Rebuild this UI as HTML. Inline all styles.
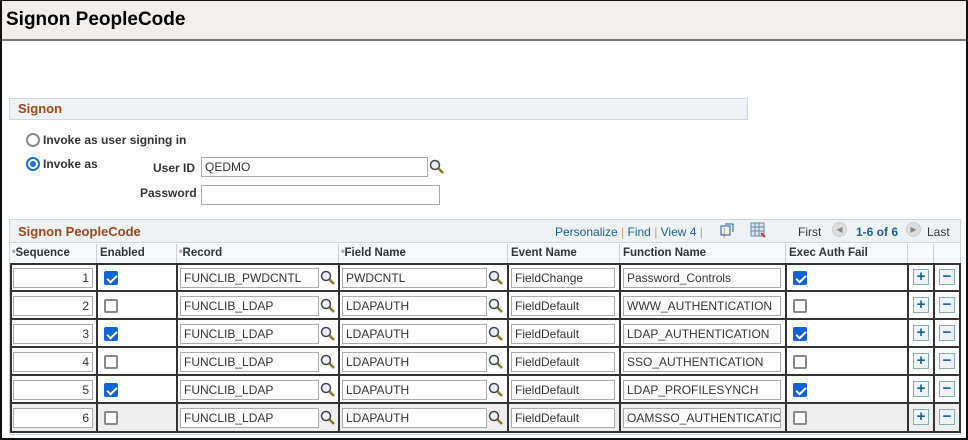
<!DOCTYPE html>
<html><head><meta charset="utf-8"><style>
*{box-sizing:border-box;margin:0;padding:0}
body{width:968px;height:440px;position:relative;background:#fff;font-family:"Liberation Sans",Arial,sans-serif;font-size:12px;color:#333;overflow:hidden}
.a{position:absolute}
.frame{left:0;top:0;width:968px;height:440px;border:2px solid #111;border-top:1px solid #111}
.hdr{left:2px;top:1px;width:964px;height:40px;background:#f0efee;border-bottom:2px solid #777}
.ttl{left:6px;top:9px;font-size:19px;font-weight:bold;color:#000}
.sec{background:#eff2f4;border:1px solid #cfd5d9;color:#a0461c;font-weight:bold;font-size:13px;padding-left:8px;line-height:19px}
.b{font-weight:bold;color:#333}
.inp{border:1px solid #aaa;background:#fff;height:20px;font-size:12px;line-height:18px;padding-left:3px;color:#333;white-space:nowrap;overflow:hidden}
.rad{width:14px;height:14px;border-radius:50%;border:2px solid #888;background:#fff}
.rad.on{border-color:#1a6fd9}
.rad.on::after{content:"";position:absolute;left:2px;top:2px;width:6px;height:6px;border-radius:50%;background:#1a6fd9}
.cb{width:14px;height:14px;border:2px solid #888;border-radius:2px;background:#fff}
.cb.on{background:#1463d6;border-color:#1463d6}
.cb.on::after{content:"";position:absolute;left:3px;top:0px;width:4px;height:8px;border:solid #fff;border-width:0 2px 2px 0;transform:rotate(45deg)}
.hc{font-weight:bold;font-size:11.5px;color:#333;top:247px}
.pb{width:16px;height:16px;border:1px solid #8aa;background:#eef3f7;color:#1b5ea0;font-weight:bold;font-size:15px;line-height:13px;text-align:center}
</style></head><body>
<div class="a hdr"></div>
<div class="a ttl">Signon PeopleCode</div>

<div class="a sec" style="left:9px;top:98px;width:739px;height:22px">Signon</div>
<div class="a rad" style="left:26px;top:133px"></div>
<div class="a b" style="left:43px;top:133px">Invoke as user signing in</div>
<div class="a rad on" style="left:26px;top:157px"></div>
<div class="a b" style="left:43px;top:157px">Invoke as</div>
<div class="a b" style="left:153px;top:161px">User ID</div>
<div class="a inp" style="left:201px;top:157px;width:227px">QEDMO</div>
<svg class="a" style="left:429px;top:159px" width="16" height="16" viewBox="0 0 16 16"><circle cx="6" cy="6" r="4.5" fill="#e8f0f6" stroke="#445" stroke-width="1.5"/><path d="M9.5 9.5 L14 14" stroke="#8a7a20" stroke-width="2.5"/></svg>
<div class="a b" style="left:140px;top:186px">Password</div>
<div class="a inp" style="left:201px;top:185px;width:239px"></div>

<div class="a" style="left:9px;top:219px;width:952px;height:216px;border:1px solid #cfd5d9"></div>
<div class="a sec" style="left:9px;top:219px;width:952px;height:24px;line-height:23px">Signon PeopleCode</div>
<div class="a" style="left:555px;top:225px;color:#1b5ea0">Personalize <span style="color:#c8a060">|</span> Find <span style="color:#c8a060">|</span> View 4 <span style="color:#c8a060">|</span> <span style="display:inline-block;width:13px"></span> <span style="color:#c8a060">|</span></div>
<svg class="a" style="left:720px;top:223px" width="14" height="13"><rect x="1" y="3" width="9" height="9" fill="none" stroke="#1b5ea0"/><path d="M5 1h8v8" fill="none" stroke="#1b5ea0"/></svg>
<svg class="a" style="left:750px;top:222px" width="16" height="16"><rect x="1" y="1" width="13" height="13" fill="#dde6f0" stroke="#6a85a5"/><path d="M1 5h13M1 9h13M5 1v13M9 1v13" stroke="#6a85a5"/><path d="M11 11l4 4" stroke="#c33" stroke-width="2"/></svg>
<div class="a" style="left:798px;top:225px;color:#333">First</div>
<div class="a" style="left:832px;top:222px;width:15px;height:15px;border-radius:50%;background:#ddd;border:1px solid #ccc;font-size:8px;color:#888;text-align:center;line-height:13px">◀</div>
<div class="a" style="left:856px;top:225px;color:#1b5ea0;font-weight:bold">1-6 of 6</div>
<div class="a" style="left:906px;top:222px;width:15px;height:15px;border-radius:50%;background:#ddd;border:1px solid #ccc;font-size:8px;color:#888;text-align:center;line-height:13px">▶</div>
<div class="a" style="left:927px;top:225px;color:#333">Last</div>

<div class="a" style="left:10px;top:244px;width:950px;height:20px;background:#f6f8f9"></div>
<div class="a hc" style="left:12px"><span style="color:#889;font-size:9px">*</span>Sequence</div>
<div class="a hc" style="left:100px">Enabled</div>
<div class="a hc" style="left:179px"><span style="color:#889;font-size:9px">*</span>Record</div>
<div class="a hc" style="left:341px"><span style="color:#889;font-size:9px">*</span>Field Name</div>
<div class="a hc" style="left:511px">Event Name</div>
<div class="a hc" style="left:623px">Function Name</div>
<div class="a hc" style="left:789px">Exec Auth Fail</div>
<div class="a" style="left:96px;top:244px;width:1px;height:20px;background:#ccd"></div>
<div class="a" style="left:176px;top:244px;width:1px;height:20px;background:#ccd"></div>
<div class="a" style="left:338px;top:244px;width:1px;height:20px;background:#ccd"></div>
<div class="a" style="left:507px;top:244px;width:1px;height:20px;background:#ccd"></div>
<div class="a" style="left:619px;top:244px;width:1px;height:20px;background:#ccd"></div>
<div class="a" style="left:785px;top:244px;width:1px;height:20px;background:#ccd"></div>
<div class="a" style="left:907px;top:244px;width:1px;height:20px;background:#ccd"></div>
<div class="a" style="left:933px;top:244px;width:1px;height:20px;background:#ccd"></div>

<div class="a" style="left:10px;top:403px;width:950px;height:28px;background:#eee"></div>
<div class="a" style="left:10px;top:263px;width:951px;height:170px;border:2px solid #333"></div>
<div class="a" style="left:10px;top:290px;width:951px;height:2px;background:#333"></div>
<div class="a" style="left:10px;top:318px;width:951px;height:2px;background:#333"></div>
<div class="a" style="left:10px;top:346px;width:951px;height:2px;background:#333"></div>
<div class="a" style="left:10px;top:374px;width:951px;height:2px;background:#333"></div>
<div class="a" style="left:10px;top:402px;width:951px;height:2px;background:#333"></div>
<div class="a" style="left:96px;top:263px;width:2px;height:170px;background:#333"></div>
<div class="a" style="left:176px;top:263px;width:2px;height:170px;background:#333"></div>
<div class="a" style="left:338px;top:263px;width:2px;height:170px;background:#333"></div>
<div class="a" style="left:507px;top:263px;width:2px;height:170px;background:#333"></div>
<div class="a" style="left:619px;top:263px;width:2px;height:170px;background:#333"></div>
<div class="a" style="left:785px;top:263px;width:2px;height:170px;background:#333"></div>
<div class="a" style="left:907px;top:263px;width:2px;height:170px;background:#333"></div>
<div class="a" style="left:933px;top:263px;width:2px;height:170px;background:#333"></div>

<div id="rows"></div>
<script>
var d=[[1,1,"FUNCLIB_PWDCNTL","PWDCNTL","FieldChange","Password_Controls",1],
[2,0,"FUNCLIB_LDAP","LDAPAUTH","FieldDefault","WWW_AUTHENTICATION",0],
[3,1,"FUNCLIB_LDAP","LDAPAUTH","FieldDefault","LDAP_AUTHENTICATION",1],
[4,0,"FUNCLIB_LDAP","LDAPAUTH","FieldDefault","SSO_AUTHENTICATION",0],
[5,1,"FUNCLIB_LDAP","LDAPAUTH","FieldDefault","LDAP_PROFILESYNCH",1],
[6,0,"FUNCLIB_LDAP","LDAPAUTH","FieldDefault","OAMSSO_AUTHENTICATIOI",0]];
var h="",mg='<svg class="a" style="left:LPX;top:TPpx" width="16" height="16" viewBox="0 0 16 16"><circle cx="6" cy="6" r="4.5" fill="#e8f0f6" stroke="#445" stroke-width="1.5"/><path d="M9.5 9.5 L14 14" stroke="#8a7a20" stroke-width="2.5"/></svg>';
d.forEach(function(r,i){var t=268+i*28;
h+='<div class="a inp" style="left:13px;top:'+t+'px;width:80px;text-align:right;padding-right:3px">'+r[0]+'</div>';
h+='<div class="a cb'+(r[1]?' on':'')+'" style="left:104px;top:'+(t+3)+'px"></div>';
h+='<div class="a inp" style="left:180px;top:'+t+'px;width:139px">'+r[2]+'</div>';
h+=mg.replace("LPX","320px").replace("TP",t+2);
h+='<div class="a inp" style="left:342px;top:'+t+'px;width:145px">'+r[3]+'</div>';
h+=mg.replace("LPX","488px").replace("TP",t+2);
h+='<div class="a inp" style="left:511px;top:'+t+'px;width:104px">'+r[4]+'</div>';
h+='<div class="a inp" style="left:623px;top:'+t+'px;width:158px">'+r[5]+'</div>';
h+='<div class="a cb'+(r[6]?' on':'')+'" style="left:793px;top:'+(t+3)+'px"></div>';
h+='<div class="a pb" style="left:913px;top:'+(t+1)+'px">+</div>';
h+='<div class="a pb" style="left:939px;top:'+(t+1)+'px">&minus;</div>';});
document.getElementById("rows").innerHTML=h;
</script>
<div class="a frame"></div>
</body></html>
